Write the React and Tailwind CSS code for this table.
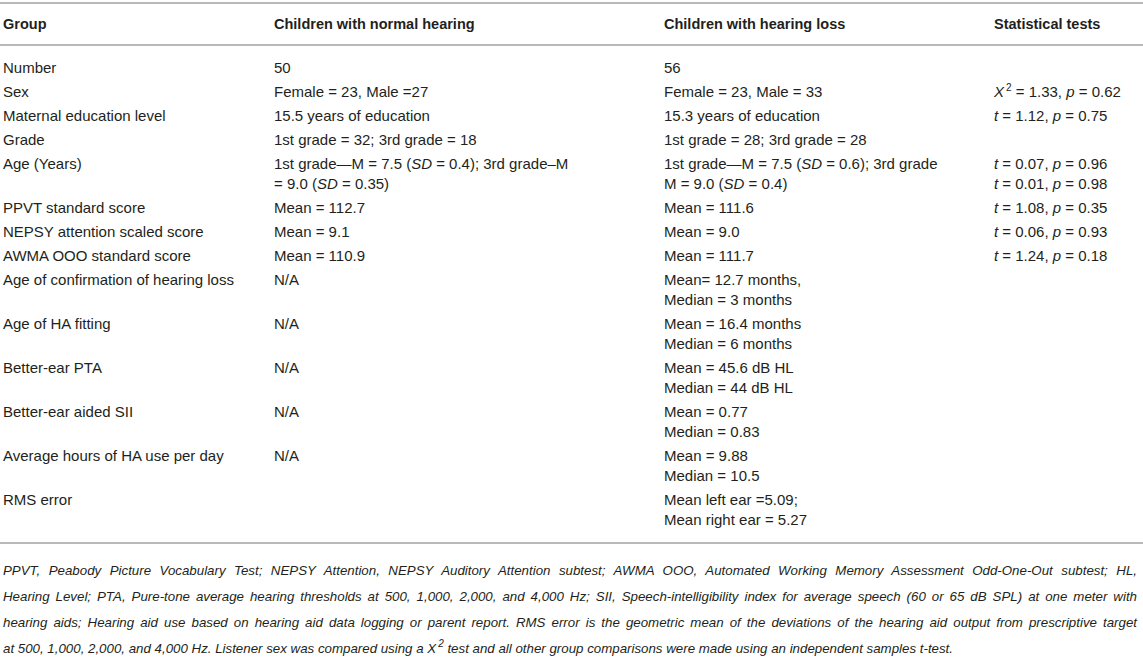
const I = ({ children }) => <i>{children}</i>
const Sup = ({ children }) => <span className="relative -top-[6px] ml-[2px] text-[10px] leading-none">{children}</span>

const rows = [
  ['Number', ['50'], ['56'], []],
  ['Sex', ['Female = 23, Male =27'], ['Female = 23, Male = 33'], [<><I>X</I><Sup>2</Sup> = 1.33, <I>p</I> = 0.62</>]],
  ['Maternal education level', ['15.5 years of education'], ['15.3 years of education'], [<><I>t</I> = 1.12, <I>p</I> = 0.75</>]],
  ['Grade', ['1st grade = 32; 3rd grade = 18'], ['1st grade = 28; 3rd grade = 28'], []],
  [
    'Age (Years)',
    [<>1st grade—M = 7.5 (<I>SD</I> = 0.4); 3rd grade–M</>, <>= 9.0 (<I>SD</I> = 0.35)</>],
    [<>1st grade—M = 7.5 (<I>SD</I> = 0.6); 3rd grade</>, <>M = 9.0 (<I>SD</I> = 0.4)</>],
    [<><I>t</I> = 0.07, <I>p</I> = 0.96</>, <><I>t</I> = 0.01, <I>p</I> = 0.98</>],
  ],
  ['PPVT standard score', ['Mean = 112.7'], ['Mean = 111.6'], [<><I>t</I> = 1.08, <I>p</I> = 0.35</>]],
  ['NEPSY attention scaled score', ['Mean = 9.1'], ['Mean = 9.0'], [<><I>t</I> = 0.06, <I>p</I> = 0.93</>]],
  ['AWMA OOO standard score', ['Mean = 110.9'], ['Mean = 111.7'], [<><I>t</I> = 1.24, <I>p</I> = 0.18</>]],
  ['Age of confirmation of hearing loss', ['N/A'], ['Mean= 12.7 months,', 'Median = 3 months'], []],
  ['Age of HA fitting', ['N/A'], ['Mean = 16.4 months', 'Median = 6 months'], []],
  ['Better-ear PTA', ['N/A'], ['Mean = 45.6 dB HL', 'Median = 44 dB HL'], []],
  ['Better-ear aided SII', ['N/A'], ['Mean = 0.77', 'Median = 0.83'], []],
  ['Average hours of HA use per day', ['N/A'], ['Mean = 9.88', 'Median = 10.5'], []],
  ['RMS error', [], ['Mean left ear =5.09;', 'Mean right ear = 5.27'], []],
]

const notes = [
  'PPVT, Peabody Picture Vocabulary Test; NEPSY Attention, NEPSY Auditory Attention subtest; AWMA OOO, Automated Working Memory Assessment Odd-One-Out subtest; HL,',
  'Hearing Level; PTA, Pure-tone average hearing thresholds at 500, 1,000, 2,000, and 4,000 Hz; SII, Speech-intelligibility index for average speech (60 or 65 dB SPL) at one meter with',
  'hearing aids; Hearing aid use based on hearing aid data logging or parent report. RMS error is the geometric mean of the deviations of the hearing aid output from prescriptive target',
]

const cols = 'grid grid-cols-[271px_390px_330px_1fr]'

function Cell({ lines }) {
  return (
    <div className="whitespace-nowrap">
      {lines.map((l, i) => (
        <div key={i}>{l}</div>
      ))}
    </div>
  )
}

export default function App() {
  return (
    <div className="bg-white text-[#231f20] text-[15px] leading-[20px] pt-[2px]" style={{ fontFamily: '"Liberation Sans", Arial, sans-serif' }}>
      <div className="border-t-2 border-[#b9b9b9]">
        <div className={`${cols} font-bold text-[14.5px] pl-[3px] py-[10px] border-b-2 border-[#b9b9b9]`}>
          <div>Group</div>
          <div>Children with normal hearing</div>
          <div>Children with hearing loss</div>
          <div>Statistical tests</div>
        </div>
        <div className="pt-[10px] pb-[10px] border-b-2 border-[#b9b9b9]">
          {rows.map(([label, a, b, c]) => (
            <div key={label} className={`${cols} pl-[3px] py-[2px]`}>
              <div>{label}</div>
              <Cell lines={a} />
              <Cell lines={b} />
              <Cell lines={c} />
            </div>
          ))}
        </div>
      </div>
      <div className="italic text-[13.3px] leading-[26px] pl-[3px] pr-[6px] pt-[14px]">
        {notes.map(n => (
          <div key={n} className="whitespace-nowrap text-justify [text-align-last:justify]">{n}</div>
        ))}
        <div>
          at 500, 1,000, 2,000, and 4,000 Hz. Listener sex was compared using a X<Sup>2</Sup> test and all other group comparisons were made using an independent samples t-test.
        </div>
      </div>
    </div>
  )
}
